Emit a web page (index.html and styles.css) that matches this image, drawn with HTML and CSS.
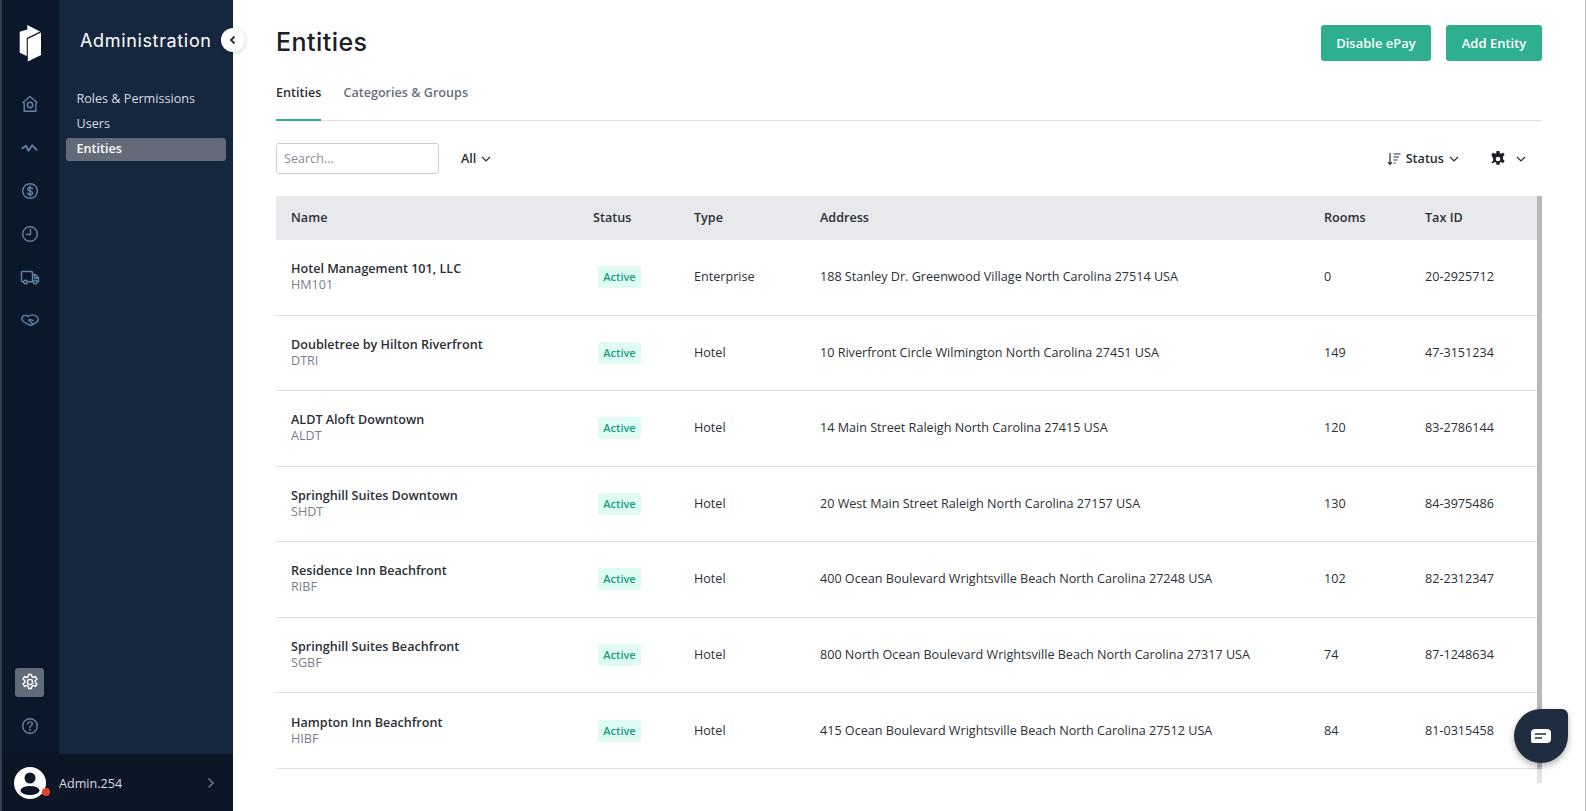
FILE: index.html
```html
<!DOCTYPE html>
<html lang="en">
<head>
<meta charset="utf-8">
<title>Entities</title>
<link rel="stylesheet" href="styles.css">
</head>
<body>
<div class="app">
  <nav class="rail">
    <svg class="logo" viewBox="0 0 22 38"><path class="w" d="M8.300 1L21 7.400 7.700 14V32L.700 28.800V7.700L8.300 5.500z"/><path class="w" d="M8.800 15L22 8.500V31L8.800 37.500z"/></svg>
    <a class="ri ri-first"><svg viewBox="0 0 20 20"><path d="M10 2.500L17 8.500 15.800 9.300V17.300H4.200V9.300L3 8.500z"/><circle cx="10" cy="11" r="2.700"/></svg></a>
    <a class="ri"><svg viewBox="0 0 20 20"><path d="M2.300 11.300L6 8.700l2.300 5 4-5.400 4.400 4.700" stroke-width="1.800"/></svg></a>
    <a class="ri"><svg viewBox="0 0 20 20"><circle cx="10" cy="10" r="7.300"/><path d="M12.500 7.700c-.5-1-1.400-1.300-2.500-1.300-1.300 0-2.400.6-2.400 1.800 0 2.600 5 1.100 5 3.700 0 1.100-1.100 1.800-2.600 1.800-1.200 0-2.200-.5-2.700-1.400M10 5v10"/></svg></a>
    <a class="ri"><svg viewBox="0 0 20 20"><circle cx="10" cy="10" r="7.300"/><path d="M10.500 5.500v5H6.500"/></svg></a>
    <a class="ri"><svg viewBox="0 0 20 20"><path d="M3.500 14.800H2.500q-1 0-1-1V5.500q0-1 1-1h9q1 0 1 1v9.300H7.500M12.500 7.500h3l3 3.300v4h-1.500M12.500 14.800h1M14.500 8v3h3.500"/><circle cx="5.500" cy="15" r="1.800"/><circle cx="15.200" cy="15" r="1.800"/></svg></a>
    <a class="ri"><svg viewBox="0 0 20 20"><path d="M8 6C5 4.500 2 6 1.800 8.500 1.700 11 5 13 9.500 15c2 1 3.500-.5 2.500-2L8.500 10c1.500-1 3 0 4.500.5"/><path d="M8 6.500c3-2.300 5-1.800 6.500-1.200 2.500 1 4.200 3 3.700 5-.5 1.800-3.500 3.500-6.200 4.700"/></svg></a>
    <a class="ri ri-active"><svg viewBox="0 0 20 20"><path d="M8.600 2.500h2.800l.4 2.200 1.700.8 2-1 1.500 2.500-1.700 1.500v1.900l1.700 1.500-1.500 2.500-2-1-1.700.9-.4 2.200H8.600l-.4-2.200-1.700-.9-2 1-1.500-2.500 1.700-1.500V8.500L3 7l1.500-2.500 2 1 1.700-.8z"/><circle cx="10" cy="10" r="2.600"/></svg></a>
    <a class="ri"><svg viewBox="0 0 20 20"><circle cx="10" cy="10" r="7.300"/><path d="M7.800 8c0-1.300 1-2.100 2.300-2.100 1.300 0 2.200.8 2.200 1.900 0 1.800-2.300 1.700-2.300 3.700M10 13.200v1.200"/></svg></a>
  </nav>

  <aside class="sub">
    <h2 class="sub-title">Administration</h2>
    <button class="collapse"><svg viewBox="0 0 10 10"><path d="M6.500 1.500L3 5l3.500 3.500"/></svg></button>
    <ul class="sub-list">
      <li class="sub-item">Roles &amp; Permissions</li>
      <li class="sub-item">Users</li>
      <li class="sub-item sub-active">Entities</li>
    </ul>
  </aside>

  <div class="user">
    <span class="avatar">
      <svg viewBox="0 0 32 32"><circle cx="16" cy="16" r="16" fill="#fff"/><circle cx="16" cy="11" r="5.500" fill="#0d1626"/><ellipse cx="16" cy="23.500" rx="9.500" ry="4.500" fill="#0d1626"/></svg>
      <i class="dot"></i>
    </span>
    <span class="user-name">Admin.254</span>
    <svg class="user-chev" viewBox="0 0 10 12"><path d="M2.500 1.500L7 6l-4.500 4.500"/></svg>
  </div>

  <main class="main">
    <header class="head">
      <h1 class="title">Entities</h1>
      <div class="actions">
        <button class="btn btn-wide">Disable ePay</button>
        <button class="btn btn-narrow">Add Entity</button>
      </div>
    </header>
    <div class="tabs">
      <span class="tab tab-on">Entities</span>
      <span class="tab">Categories &amp; Groups</span>
    </div>
    <div class="tools">
      <input class="search" placeholder="Search...">
      <span class="drop drop-all">All <svg class="chev" viewBox="0 0 10 6"><path d="M1 1l4 4 4-4"/></svg></span>
      <span class="drop drop-status">
        <svg class="sort" viewBox="0 0 14 14"><path d="M3 1v11M1 10l2 2.500L5 10M6.500 2h7M6.500 5h5.500M6.500 8h4M6.500 11h2"/></svg>
        Status <svg class="chev" viewBox="0 0 10 6"><path d="M1 1l4 4 4-4"/></svg>
      </span>
      <span class="drop drop-gear">
        <svg class="gear" viewBox="0 0 14 14"><path fill-rule="evenodd" d="M5.700 0h2.600l.3 1.900 1.100.5L11.400 1.300l1.400 2.200-1.500 1.300v2.400l1.500 1.300-1.400 2.200-1.700-1.100-1.100.5-.3 1.900H5.700l-.3-1.900-1.100-.5-1.700 1.100L1.200 10l1.500-1.300V6.300L1.200 3.500l1.400-2.200 1.700 1.100 1.100-.5zM7 5a2 2 0 1 0 0 4 2 2 0 0 0 0-4z"/></svg>
        <svg class="chev chev-gear" viewBox="0 0 10 6"><path d="M1 1l4 4 4-4"/></svg>
      </span>
    </div>
    <section class="table">
      <div class="row row-head"><span>Name</span><span>Status</span><span>Type</span><span>Address</span><span>Rooms</span><span>Tax ID</span></div>
      <div class="row"><div><b>Hotel Management 101, LLC</b><small>HM101</small></div><div><em class="badge">Active</em></div><span class="cell">Enterprise</span><span class="cell">188 Stanley Dr. Greenwood Village North Carolina 27514 USA</span><span class="cell">0</span><span class="cell">20-2925712</span></div>
      <div class="row"><div><b>Doubletree by Hilton Riverfront</b><small>DTRI</small></div><div><em class="badge">Active</em></div><span class="cell">Hotel</span><span class="cell">10 Riverfront Circle Wilmington North Carolina 27451 USA</span><span class="cell">149</span><span class="cell">47-3151234</span></div>
      <div class="row"><div><b>ALDT Aloft Downtown</b><small>ALDT</small></div><div><em class="badge">Active</em></div><span class="cell">Hotel</span><span class="cell">14 Main Street Raleigh North Carolina 27415 USA</span><span class="cell">120</span><span class="cell">83-2786144</span></div>
      <div class="row"><div><b>Springhill Suites Downtown</b><small>SHDT</small></div><div><em class="badge">Active</em></div><span class="cell">Hotel</span><span class="cell">20 West Main Street Raleigh North Carolina 27157 USA</span><span class="cell">130</span><span class="cell">84-3975486</span></div>
      <div class="row"><div><b>Residence Inn Beachfront</b><small>RIBF</small></div><div><em class="badge">Active</em></div><span class="cell">Hotel</span><span class="cell">400 Ocean Boulevard Wrightsville Beach North Carolina 27248 USA</span><span class="cell">102</span><span class="cell">82-2312347</span></div>
      <div class="row"><div><b>Springhill Suites Beachfront</b><small>SGBF</small></div><div><em class="badge">Active</em></div><span class="cell">Hotel</span><span class="cell">800 North Ocean Boulevard Wrightsville Beach North Carolina 27317 USA</span><span class="cell">74</span><span class="cell">87-1248634</span></div>
      <div class="row"><div><b>Hampton Inn Beachfront</b><small>HIBF</small></div><div><em class="badge">Active</em></div><span class="cell">Hotel</span><span class="cell">415 Ocean Boulevard Wrightsville Beach North Carolina 27512 USA</span><span class="cell">84</span><span class="cell">81-0315458</span></div>
      <i class="thumb"></i>
    </section>
  </main>
  <button class="chat"><svg viewBox="0 0 20 14"><path fill-rule="evenodd" d="M4 0h12c2.500 0 4 1.500 4 3.500v7c0 2-1.500 3.500-4 3.500H2c-1.200 0-2-.8-2-2V4C0 1.500 1.500 0 4 0zM4 4.300v1.400h11V4.300zM4 8.300v1.400h7V8.300z" fill="#fff"/></svg></button>
</div>
</body>
</html>
```
FILE: styles.css
```css
* { box-sizing: border-box; }
html, body { margin: 0; height: 100%; }
body { font-family: "Open Sans", "Liberation Sans", sans-serif; font-size: 12.600px; color: #2b2f36; background: #fff; overflow: hidden; }
.app { position: relative; display: grid; grid-template-columns: 59px 174px 1fr; grid-template-rows: 754px 57px; height: 811px; box-shadow: inset -1px 0 0 #b9bbbe; }
.rail { grid-column: 1; grid-row: 1; background: #0b182b; box-shadow: inset 2px 0 0 #353f4f; display: flex; flex-direction: column; align-items: center; padding: 24px 0 14px 0; }
.logo { width: 22px; height: 38px; fill: #fff; }
.w { fill: #fff; }
.ri { width: 29px; height: 29px; margin-top: 14.300px; display: flex; align-items: center; justify-content: center; border-radius: 3px; }
.ri svg { width: 20px; height: 20px; fill: none; stroke: #6580a6; stroke-width: 1.400; stroke-linejoin: round; stroke-linecap: round; }
.ri-first { margin-top: 27.500px; }
.ri-active { margin-top: auto; background: #636a78; }
.ri-active svg { stroke: #fff; }
.sub { grid-column: 2; grid-row: 1; background: #17263f; padding: 27px 7px 0; position: relative; }
.sub-title { margin: 0 0 0 14px; font-family: Inter, "Open Sans", sans-serif; font-size: 18px; line-height: 28px; font-weight: 400; letter-spacing: .650px; color: #fff; white-space: nowrap; }
.collapse { position: absolute; top: 28px; left: 162px; width: 24px; height: 24px; padding: 0; border: 0; border-radius: 50%; background: #fff; box-shadow: 0 1px 4px rgba(0,0,0,.2); display: flex; align-items: center; justify-content: center; }
.collapse svg { width: 10px; height: 10px; fill: none; stroke: #1f2d40; stroke-width: 1.800; }
.sub-list { list-style: none; margin: 33px 0 0; padding: 0; }
.sub-item { height: 23px; line-height: 21px; margin-bottom: 2px; padding-left: 10.500px; border-radius: 3px; color: #d9dde3; }
.sub-active { background: #636a78; color: #fff; font-weight: 600; }
.user { grid-column: 1 / 3; grid-row: 2; background: #0d1626; box-shadow: inset 2px 0 0 #353f4f; display: flex; align-items: center; padding: 1px 0 0 14px; }
.avatar { position: relative; width: 32px; height: 32px; }
.avatar svg { display: block; width: 32px; height: 32px; }
.dot { position: absolute; right: -4px; bottom: 3px; width: 8px; height: 8px; border-radius: 50%; background: #e0452e; }
.user-name { margin-left: 13px; color: #d9dde3; flex: 1; }
.user-chev { width: 10px; height: 12px; margin-right: 17px; fill: none; stroke: #6b7280; stroke-width: 1.700; }
.main { grid-column: 3; grid-row: 1 / 3; padding: 25px 44px 0 43px; min-width: 0; }
.head { display: flex; justify-content: space-between; align-items: flex-start; height: 36px; }
.title { margin: 0; font-family: Inter, "Open Sans", sans-serif; font-size: 25px; line-height: 34px; font-weight: 500; letter-spacing: .450px; color: #1c2026; }
.actions { display: flex; gap: 15px; }
.btn { height: 36px; border: 0; border-radius: 3px; background: #2eaf90; color: #fff; font: 600 13px "Open Sans", sans-serif; padding: 0; }
.btn-wide { width: 110px; }
.btn-narrow { width: 96px; }
.tabs { display: flex; gap: 22px; height: 60px; border-bottom: 1px solid #dfe1e4; padding-top: 12px; }
.tab { height: 48px; line-height: 40px; color: #6a707b; font-weight: 600; }
.tab-on { color: #2b2f36; border-bottom: 2px solid #2eaf90; }
.tools { display: flex; align-items: center; height: 31px; margin-top: 22px; }
.search { width: 163px; height: 31px; border: 1px solid #ccd0d6; border-radius: 3px; padding: 0 7px; font: 12.600px "Open Sans", sans-serif; outline: 0; }
.search::placeholder { color: #8b9098; }
.drop { display: inline-flex; align-items: center; font-weight: 600; color: #2b2f36; }
.drop-all { margin-left: 22px; }
.drop-status { margin-left: auto; }
.drop-gear { margin-left: 32px; margin-right: 16px; }
.chev { width: 10px; height: 6px; margin-left: 5px; fill: none; stroke: #2b2f36; stroke-width: 1.200; }
.chev-gear { margin-left: 11px; }
.sort { width: 14px; height: 14px; margin-right: 5px; fill: none; stroke: #2b2f36; stroke-width: 1.200; }
.gear { width: 14px; height: 14px; transform: scale(1.150); fill: #1c2026; }
.table { position: relative; margin-top: 22px; height: 587px; overflow: hidden; }
.thumb { position: absolute; top: 0; right: 0; width: 5px; height: 100%; background: linear-gradient(#b9b9b9 0 97.700%, #e3e3e3 97.700%); }
.row { display: grid; grid-template-columns: 302px 101px 126px 504px 101px 132px; align-items: center; height: 75.550px; border-bottom: 1px solid #dfe1e4; }
.row > * { padding-left: 15px; }
.cell { padding-bottom: 1px; }
.row-head { height: 44px; padding-bottom: 2px; background: #e8e9ed; border: 0; font-weight: 600; }
.row b { display: block; font-weight: 600; line-height: 16px; color: #2b2f36; }
.row small { display: block; font-size: 12.600px; line-height: 16px; color: #7a808a; }
.badge { display: inline-block; margin-left: 5px; width: 43px; height: 22px; line-height: 22px; text-align: center; border-radius: 3px; background: #e0fbf4; color: #17a07f; font-style: normal; font-weight: 600; font-size: 11px; }
.chat { position: absolute; left: 1514px; top: 709px; width: 54px; height: 54px; padding: 0; border: 0; border-radius: 50% 6px 50% 50%; background: #1f2d40; box-shadow: 0 3px 6px rgba(0,0,0,.3); display: flex; align-items: center; justify-content: center; }
.chat svg { width: 20px; height: 14px; }
```
